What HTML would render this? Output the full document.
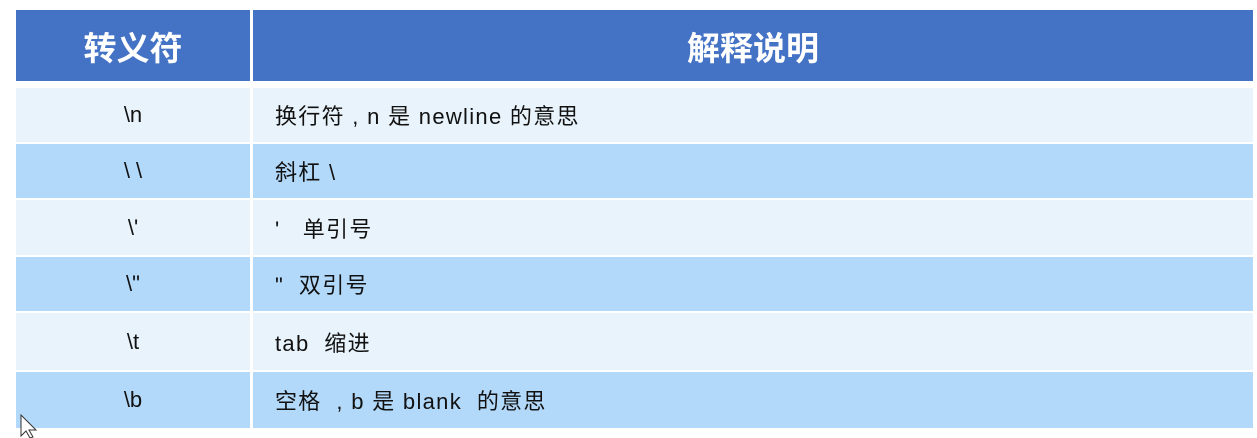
<!DOCTYPE html>
<html><head><meta charset="utf-8"><style>
body{margin:0;width:1257px;height:438px;background:#fff;position:relative;overflow:hidden;font-family:"Liberation Sans","Noto Sans CJK SC",sans-serif;}
.c{position:absolute;display:flex;align-items:center;box-sizing:border-box;}
.h{background:#4472C4;color:#fff;font-weight:bold;font-size:33px;justify-content:center;top:10px;height:71px;}
.a{left:16px;width:234px;justify-content:center;font-size:22px;color:#111;}
.b{left:253px;width:1000px;padding-left:22px;font-size:22px;color:#111;letter-spacing:1.3px;}
.l{background:#E8F3FB}.d{background:#B3D9FA}
</style></head><body>
<div class="c h" style="left:16px;width:234px">转义符</div>
<div class="c h" style="left:253px;width:1000px">解释说明</div>

<div class="c a l" style="top:88px;height:54px">\n</div>
<div class="c b l" style="top:88px;height:54px">换行符&nbsp;,&nbsp;n 是 newline 的意思</div>
<div class="c a d" style="top:144px;height:54px">\ \</div>
<div class="c b d" style="top:144px;height:54px">斜杠 \</div>
<div class="c a l" style="top:200px;height:55px">\'</div>
<div class="c b l" style="top:200px;height:55px">'&nbsp;&nbsp;&nbsp;单引号</div>
<div class="c a d" style="top:257px;height:54px">\"</div>
<div class="c b d" style="top:257px;height:54px">"&nbsp;&nbsp;双引号</div>
<div class="c a l" style="top:313px;height:57px">\t</div>
<div class="c b l" style="top:313px;height:57px">tab&nbsp;&nbsp;缩进</div>
<div class="c a d" style="top:372px;height:56px">\b</div>
<div class="c b d" style="top:372px;height:56px">空格&nbsp;&nbsp;,&nbsp;b 是 blank&nbsp;&nbsp;的意思</div>
<svg style="position:absolute;left:20px;top:414px" width="18" height="24"><path d="M1 1 L1 22 L6 17 L10 24 L13 23 L9 16 L16 16 Z" fill="#fff" stroke="#333" stroke-width="1"/></svg>
</body></html>
